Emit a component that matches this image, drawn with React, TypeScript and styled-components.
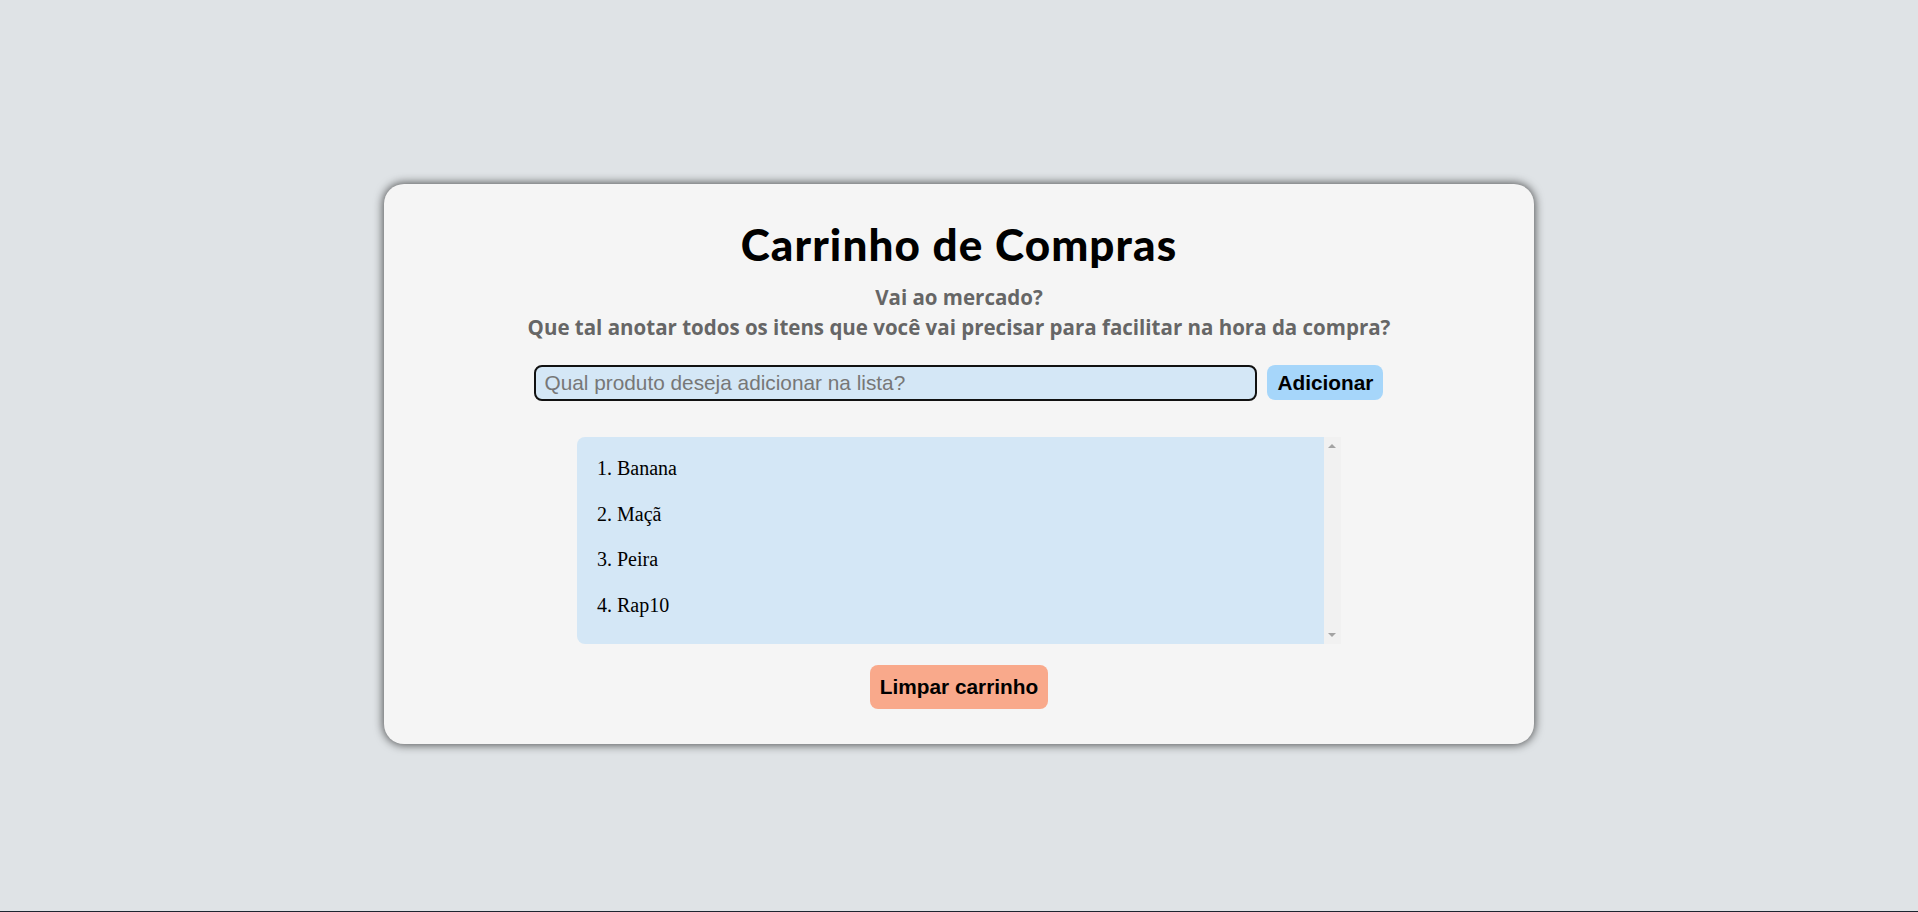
import React from "react";
import styled, { createGlobalStyle } from "styled-components";

const GlobalStyle = createGlobalStyle`
  html, body {
    margin: 0;
    padding: 0;
    background: #dfe3e6;
  }
  body {
    min-height: 912px;
    font-family: "Liberation Serif", "Times New Roman", serif;
  }
`;

const Page = styled.main`
  display: flex;
  flex-direction: column;
  align-items: center;
  padding-top: 184px;
  min-height: 912px;
  box-sizing: border-box;
  border-bottom: 1px solid #1e2530;
`;

const Card = styled.section`
  width: 60%;
  box-sizing: border-box;
  background: #f5f5f5;
  border-radius: 20px;
  box-shadow: 0 0 10px 1px rgba(0, 0, 0, 0.65);
  padding: 34px 0 35px;
  display: flex;
  flex-direction: column;
  align-items: center;
`;

const Title = styled.h1`
  margin: 0;
  font-family: Lato, "Noto Sans", sans-serif;
  font-weight: 900;
  font-size: 44px;
  letter-spacing: 1.1px;
  line-height: 52px;
  color: #000;
`;

const Subtitle = styled.p`
  margin: 12px 0 0;
  font-family: "Open Sans", "Noto Sans", sans-serif;
  font-weight: 700;
  font-size: 20.5px;
  line-height: 30px;
  color: #666;
  text-align: center;
`;

const Form = styled.form`
  display: flex;
  gap: 10px;
  margin-top: 23px;
`;

const Input = styled.input`
  width: 723px;
  height: 36px;
  box-sizing: border-box;
  border: 2px solid #111;
  border-radius: 8px;
  background: #d4e7f6;
  padding: 0 8px;
  font-family: "Liberation Sans", Arial, sans-serif;
  font-size: 20.8px;
  color: #000;
  outline: none;
  &::placeholder {
    color: #777;
  }
`;

const Button = styled.button<{ $bg: string; $w: number; $h: number }>`
  width: ${(p) => p.$w}px;
  height: ${(p) => p.$h}px;
  border: none;
  border-radius: 8px;
  background: ${(p) => p.$bg};
  font-family: "Liberation Sans", Arial, sans-serif;
  font-weight: 700;
  font-size: 20.8px;
  color: #000;
  padding: 0;
  cursor: pointer;
`;

const ListFrame = styled.div`
  display: flex;
  width: 764px;
  height: 207px;
  margin-top: 36px;
  border-radius: 8px 0 0 8px;
  overflow: hidden;
`;

const List = styled.ol`
  flex: 1;
  margin: 0;
  padding: 9px 20px 16px;
  list-style-position: inside;
  background: #d4e7f6;
`;

const Rail = styled.div`
  width: 17px;
  background: #f1f1f1;
  display: flex;
  flex-direction: column;
  justify-content: space-between;
  align-items: center;
  padding: 7px 0;
  box-sizing: border-box;
`;

const Arrow = styled.span<{ $down?: boolean }>`
  width: 0;
  height: 0;
  border-left: 4px solid transparent;
  border-right: 4px solid transparent;
  ${(p) =>
    p.$down ? "border-top: 4px solid #a3a3a3;" : "border-bottom: 4px solid #a3a3a3;"}
`;

const Item = styled.li`
  font-family: "Liberation Serif", "Times New Roman", serif;
  font-size: 20px;
  line-height: 45.5px;
  color: #000;
`;

const ClearRow = styled.div`
  margin-top: 21px;
`;

const items = ["Banana", "Maçã", "Peira", "Rap10"];

export default function App() {
  return (
    <>
      <GlobalStyle />
      <Page>
        <Card>
          <Title>Carrinho de Compras</Title>
          <Subtitle>
            Vai ao mercado?
            <br />
            Que tal anotar todos os itens que você vai precisar para facilitar na hora da compra?
          </Subtitle>
          <Form onSubmit={(e) => e.preventDefault()}>
            <Input placeholder="Qual produto deseja adicionar na lista?" />
            <Button type="submit" $bg="#a6d6fa" $w={116} $h={35}>
              Adicionar
            </Button>
          </Form>
          <ListFrame>
            <List>
              {items.map((it) => (
                <Item key={it}>{it}</Item>
              ))}
            </List>
            <Rail aria-hidden>
              <Arrow />
              <Arrow $down />
            </Rail>
          </ListFrame>
          <ClearRow>
            <Button type="button" $bg="#f9a98b" $w={178} $h={44}>
              Limpar carrinho
            </Button>
          </ClearRow>
        </Card>
      </Page>
    </>
  );
}
